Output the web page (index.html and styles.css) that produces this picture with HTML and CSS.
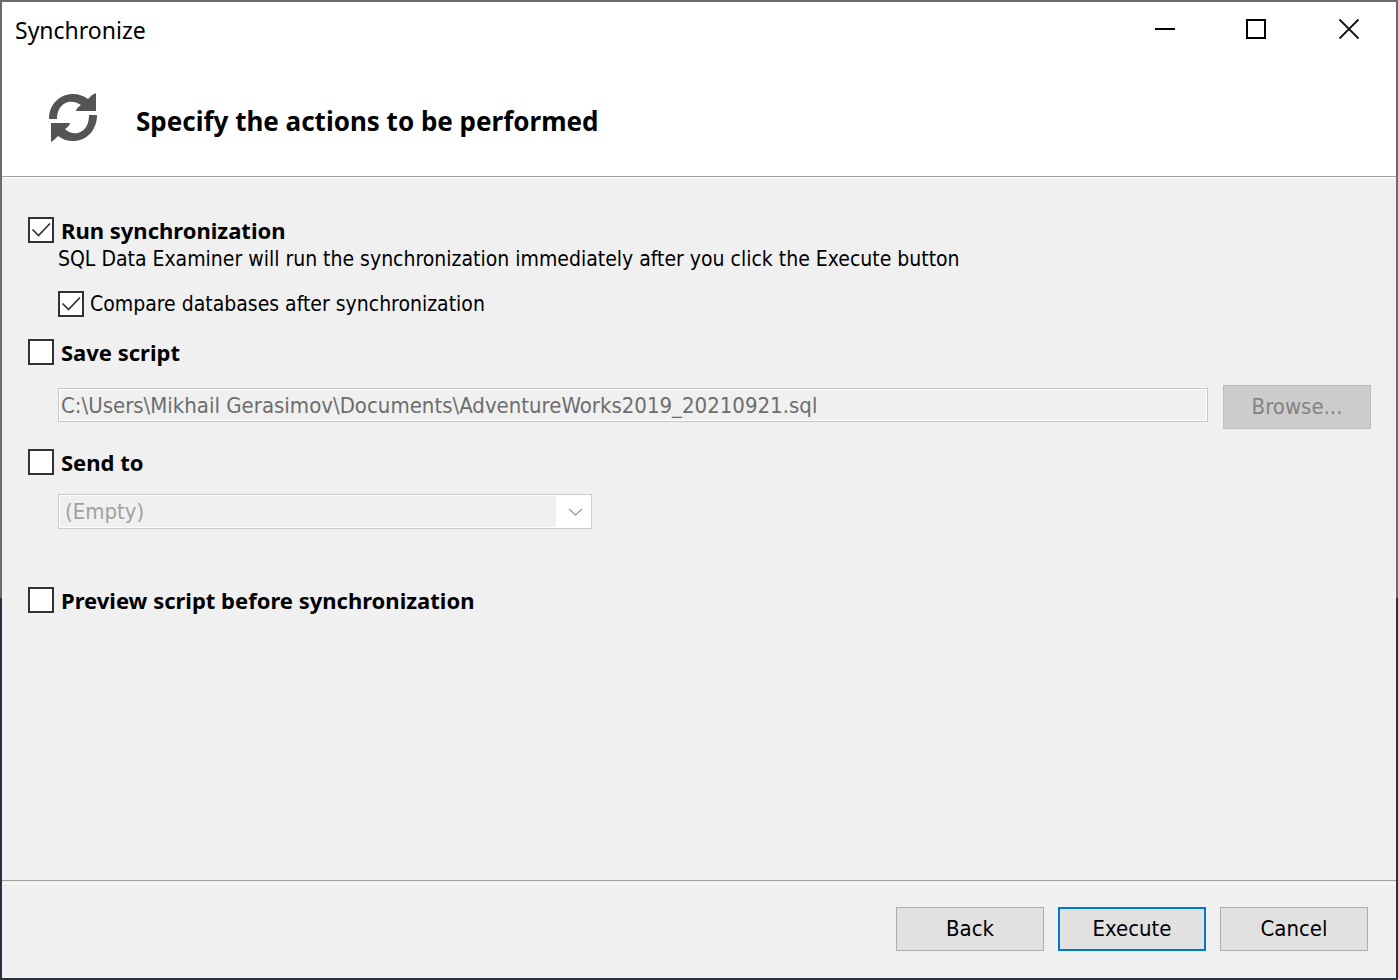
FILE: index.html
```html
<!DOCTYPE html>
<html lang="en">
<head>
<meta charset="utf-8">
<title>Synchronize</title>
<link rel="stylesheet" href="styles.css">
</head>
<body>
<form class="window">
  <header class="header">
    <div class="titlebar">
      <span class="title">Synchronize</span>
      <div class="controls">
        <button type="button" class="control" aria-label="Minimize"><svg width="22" height="22" viewBox="0 0 22 22"><path d="M1 11H21" stroke="#000" stroke-width="2"/></svg></button>
        <button type="button" class="control" aria-label="Maximize"><svg width="22" height="22" viewBox="0 0 22 22"><path d="M1 2H19V20H1Z" fill="none" stroke="#000" stroke-width="2"/></svg></button>
        <button type="button" class="control" aria-label="Close"><svg width="22" height="22" viewBox="0 0 22 22"><path d="M1.500 1.500L20.500 20.500M20.500 1.500L1.500 20.500" stroke="#111" stroke-width="1.800"/></svg></button>
      </div>
    </div>
    <div class="banner">
      <svg class="sync" width="50" height="50" viewBox="0 0 50 50" fill="#545454" aria-hidden="true">
        <path d="M1 26C1 11 12 1 25 1C31 1 36 3 40 6L44 2L48 0V18H28C28 16 30 14 33 12C29 9 24 8 20 9C13 11 9 17 9 26Z"/>
        <path d="M49 22C49 38 38 48 25 48C19 48 14 46 10 43L6 47L3 49V30H22C22 32 20 34 17 36C21 40 26 41 30 40C37 38 41 32 41 22Z"/>
      </svg>
      <h1 class="heading">Specify the actions to be performed</h1>
    </div>
  </header>
  <main class="content">
    <section class="group run">
      <label class="check strong"><input type="checkbox" class="box" checked>Run synchronization</label>
      <p class="note">SQL Data Examiner will run the synchronization immediately after you click the Execute button</p>
      <label class="check nested"><input type="checkbox" class="box" checked>Compare databases after synchronization</label>
    </section>
    <section class="group save">
      <label class="check strong"><input type="checkbox" class="box">Save script</label>
      <div class="file-row">
        <input type="text" class="path" aria-label="Script file" value="C:\Users\Mikhail Gerasimov\Documents\AdventureWorks2019_20210921.sql" disabled>
        <button type="button" class="button" disabled>Browse...</button>
      </div>
    </section>
    <section class="group send">
      <label class="check strong"><input type="checkbox" class="box">Send to</label>
      <div class="combo">
        <select class="select" aria-label="Send to target" disabled><option>(Empty)</option></select>
        <svg class="arrow" width="34" height="31" viewBox="0 0 34 31" aria-hidden="true"><path d="M0 0H34V31H0Z" fill="#fff"/><path d="M13 13L19.500 19L26 13" fill="none" stroke="#a0a0a0" stroke-width="1.400"/></svg>
      </div>
    </section>
    <label class="check strong"><input type="checkbox" class="box">Preview script before synchronization</label>
  </main>
  <footer class="footer">
    <button type="button" class="button">Back</button>
    <button type="submit" class="button primary">Execute</button>
    <button type="button" class="button">Cancel</button>
  </footer>
</form>
</body>
</html>
```
FILE: styles.css
```css
* { box-sizing: border-box; }
body {
  margin: 0;
  min-height: 100vh;
  padding: 2px;
  display: flex;
  background: linear-gradient(#6b6b6b 61%, #2a3040 61%);
  font-family: "DejaVu Sans Condensed", Tahoma, sans-serif;
  font-size: 22px;
  line-height: 28px;
  color: #000;
}
.window { flex: 1; display: flex; flex-direction: column; background: #f0f0f0; }
.header { background: #fff; border-bottom: 1px solid #a0a0a0; padding-bottom: 32px; }
.titlebar { display: flex; justify-content: space-between; height: 58px; }
.title { padding: 14px 13px; font-family: "Noto Sans", sans-serif; font-size: 23px; }
.controls { display: flex; padding-right: 1px; }
.control { width: 92px; height: 54px; padding: 0; border: 0; background: none; display: grid; place-items: center; }
.banner { display: flex; align-items: center; gap: 38px; padding: 33px 46px 1px; }
.heading { margin: 0; padding-top: 6px; font-family: "Noto Sans", sans-serif; font-size: 26px; line-height: 36px; font-weight: 700; }
.content { flex: 1; padding: 39px 25px 24px 26px; border-top: 1px solid #fff; }
.check { display: flex; align-items: center; gap: 7px; height: 26px; }
.strong { font-family: "Noto Sans", sans-serif; font-weight: 700; line-height: 26px; }
.box {
  appearance: none;
  flex: none;
  width: 26px;
  height: 26px;
  margin: 0;
  border: 2px solid #333;
  background: #fff;
}
.box:checked { background: #fff url("data:image/svg+xml,%3Csvg xmlns='http://www.w3.org/2000/svg' viewBox='0 0 22 22'%3E%3Cpath d='M2.500 10.500L8.500 16.500L20 4.500' fill='none' stroke='%23333' stroke-width='1.700'/%3E%3C/svg%3E") center / 22px 22px no-repeat; }
.note { margin: 0 0 18px 30px; padding-top: 2px; font-size: 21px; }
.nested { margin-left: 30px; gap: 6px; font-size: 21px; }
.run { margin-bottom: 22px; }
.file-row { display: flex; align-items: center; gap: 15px; margin: 20px 0; padding-left: 30px; }
.path {
  flex: 1;
  min-width: 0;
  height: 34px;
  margin-bottom: 4px;
  padding: 0 2px;
  border: 1px solid #c8c8c8;
  box-shadow: inset 0 0 0 1px #fff;
  background: #f0f0f0;
  font: inherit;
  color: #6d6d6d;
}
.button {
  width: 148px;
  height: 44px;
  padding: 0;
  border: 1px solid #adadad;
  background: #e1e1e1;
  font: inherit;
  color: #000;
}
.button:disabled { border-color: #bfbfbf; background: #ccc; color: #838383; }
.primary { border: 2px solid #0078d7; }
.combo { position: relative; width: 534px; max-width: 100%; margin: 19px 0 58px 30px; }
.select {
  appearance: none;
  display: block;
  width: 100%;
  height: 35px;
  padding: 0 40px 0 6px;
  border: 1px solid #ccc;
  border-radius: 0;
  box-shadow: inset 0 0 0 1px #fff;
  background: #f0f0f0;
  font: inherit;
  color: #a0a0a0;
  opacity: 1;
}
.arrow { position: absolute; right: 2px; top: 2px; pointer-events: none; }
.footer {
  display: flex;
  justify-content: flex-end;
  gap: 14px;
  padding: 23px 28px 27px;
  border-top: 4px double #a0a0a0;
  border-image: linear-gradient(#a0a0a0 1px, #f0f0f0 1px 3px, #fff 3px) 4 0 0 0;
}
```
